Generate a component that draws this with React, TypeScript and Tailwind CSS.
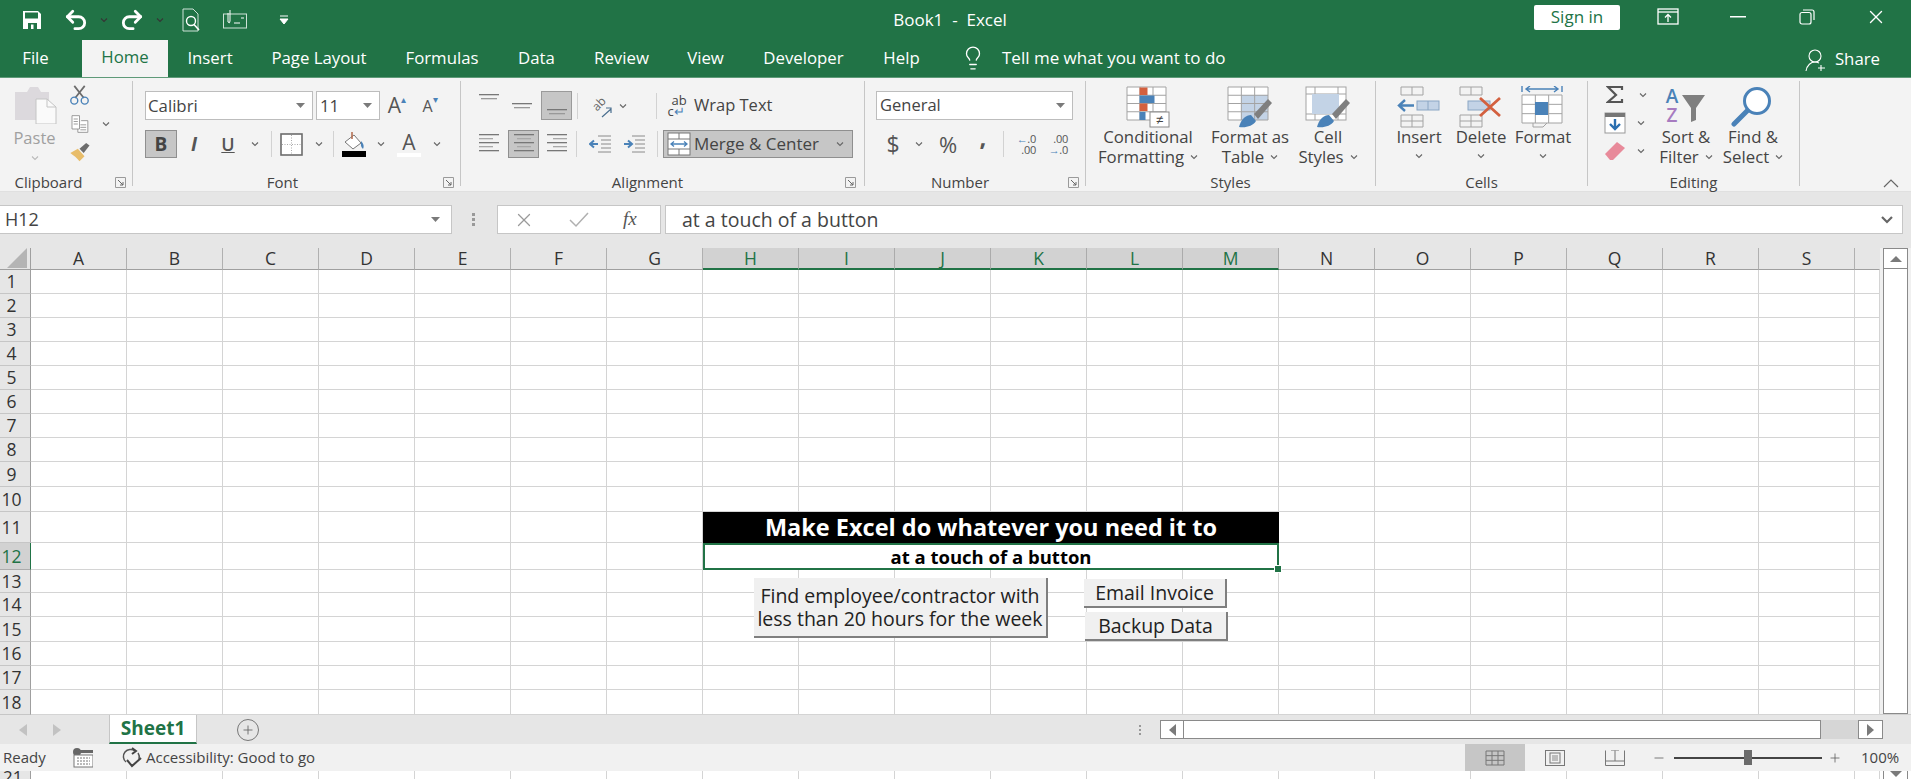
import { Undo2, Redo2, Lightbulb, Plus, X, Minus } from 'lucide-react'

const COLS = ['A', 'B', 'C', 'D', 'E', 'F', 'G', 'H', 'I', 'J', 'K', 'L', 'M', 'N', 'O', 'P', 'Q', 'R', 'S', '']
const ROWS = [
  { n: 1, h: 24 }, { n: 2, h: 24 }, { n: 3, h: 24 }, { n: 4, h: 24 }, { n: 5, h: 24 }, { n: 6, h: 24 },
  { n: 7, h: 24 }, { n: 8, h: 24 }, { n: 9, h: 25 }, { n: 10, h: 25 }, { n: 11, h: 31 }, { n: 12, h: 27 },
  { n: 13, h: 23 }, { n: 14, h: 24 }, { n: 15, h: 25 }, { n: 16, h: 24 }, { n: 17, h: 24 }, { n: 18, h: 25 },
]
const TABS = [
  { t: 'Insert', w: 'w-[44px]', ml: 'ml-[20px]' },
  { t: 'Page Layout', w: 'w-[96px]', ml: 'ml-[39px]' },
  { t: 'Formulas', w: 'w-[72px]', ml: 'ml-[39px]' },
  { t: 'Data', w: 'w-[37px]', ml: 'ml-[40px]' },
  { t: 'Review', w: 'w-[55px]', ml: 'ml-[39px]' },
  { t: 'View', w: 'w-[37px]', ml: 'ml-[38px]' },
  { t: 'Developer', w: 'w-[81px]', ml: 'ml-[39px]' },
  { t: 'Help', w: 'w-[37px]', ml: 'ml-[39px]' },
]

function Chev({ className = '' }: { className?: string }) {
  return (
    <svg width="8" height="6" viewBox="0 0 8 6" className={className}>
      <path d="M1 1.5 L4 4.5 L7 1.5" fill="none" stroke="#666" strokeWidth="1.1" />
    </svg>
  )
}

function Drop() {
  return (
    <svg width="9" height="5" viewBox="0 0 9 5">
      <path d="M0 0 H9 L4.5 5 Z" fill="#7a7a7a" />
    </svg>
  )
}

function Launcher() {
  return (
    <svg width="11" height="11" viewBox="0 0 11 11" className="shrink-0">
      <path d="M.5 .5 H10.5 V10.5 H.5 Z" fill="none" stroke="#9a9a9a" />
      <path d="M3 3 L8 8 M8 5 V8 H5" fill="none" stroke="#666" />
    </svg>
  )
}

function Sep({ className = '' }: { className?: string }) {
  return <div className={`w-px h-[26px] bg-[#d2d2d2] shrink-0 ${className}`} />
}

function AlignIcon({ rows }: { rows: [number, number][] }) {
  return (
    <svg width="20" height="22" viewBox="0 0 20 22">
      {rows.map(([x, w], i) => (
        <rect key={i} x={x} y={i * 4 + 1} width={w} height="1.3" fill={i % 2 ? '#a8a8a8' : '#777'} />
      ))}
    </svg>
  )
}

function VAlign({ y }: { y: number }) {
  return (
    <svg width="22" height="22" viewBox="0 0 22 22">
      <rect x="1" y={y} width="20" height="1.3" fill="#777" />
      <rect x="3" y={y + 4} width="16" height="1.3" fill="#999" />
    </svg>
  )
}

function GridLines({ x, y, w, h, cols, rows, color = '#a3a3a3' }: { x: number; y: number; w: number; h: number; cols: number; rows: number; color?: string }) {
  const c = Array.from({ length: cols + 1 }, (_, i) => x + (w / cols) * i)
  const r = Array.from({ length: rows + 1 }, (_, i) => y + (h / rows) * i)
  return (
    <g stroke={color} strokeWidth="1" fill="none">
      {c.map(v => <path key={`c${v}`} d={`M${v} ${y} V${y + h}`} />)}
      {r.map(v => <path key={`r${v}`} d={`M${x} ${v} H${x + w}`} />)}
    </g>
  )
}

function CondIcon() {
  return (
    <svg width="44" height="42" viewBox="0 0 44 42">
      <rect x="1" y="1" width="39" height="33" fill="#fff" />
      <GridLines x={1} y={1} w={39} h={33} cols={3} rows={4} />
      <rect x="13.5" y="1.5" width="8" height="7.5" fill="#d3603f" />
      <rect x="13.5" y="9.5" width="15" height="7.5" fill="#4a82b8" />
      <rect x="13.5" y="17.5" width="8" height="7.5" fill="#d3603f" />
      <rect x="13.5" y="26" width="6" height="8" fill="#4a82b8" />
      <rect x="24" y="26" width="19" height="15" fill="#fff" stroke="#8a8a8a" />
      <text x="33.5" y="38" fontSize="13" textAnchor="middle" fill="#444" fontFamily="'Liberation Sans', sans-serif">≠</text>
    </svg>
  )
}

function TableIcon() {
  return (
    <svg width="46" height="42" viewBox="0 0 46 42">
      <rect x="1" y="1" width="40" height="33" fill="#fff" />
      <rect x="14" y="9" width="27" height="25" fill="#c3d3e6" />
      <GridLines x={1} y={1} w={40} h={33} cols={3} rows={4} />
      <path d="M12 41 C14 33 19 29 24 29 L29 35 C26 40 19 42 12 41 Z" fill="#4a82b8" />
      <path d="M27 28 L31 33 L45 17 L41 13 Z" fill="#7f7f7f" />
    </svg>
  )
}

function CellStyleIcon() {
  return (
    <svg width="46" height="42" viewBox="0 0 46 42">
      <rect x="1" y="1" width="40" height="33" fill="#fff" stroke="#a3a3a3" />
      <path d="M1 8 H41 M10 1 V34 M33 1 V34 M1 28 H41" stroke="#a3a3a3" fill="none" />
      <rect x="7" y="8" width="27" height="20" fill="#c3d3e6" />
      <path d="M12 41 C14 33 19 29 24 29 L29 35 C26 40 19 42 12 41 Z" fill="#4a82b8" />
      <path d="M27 28 L31 33 L45 17 L41 13 Z" fill="#7f7f7f" />
    </svg>
  )
}

function InsertIcon() {
  return (
    <svg width="44" height="42" viewBox="0 0 44 42">
      <GridLines x={4} y={1} w={22} h={8} cols={2} rows={1} />
      <rect x="20" y="15" width="22" height="9" fill="#c3d3e6" stroke="#8aa6c4" />
      <path d="M31 15 V24" stroke="#8aa6c4" />
      <path d="M17 19.5 H3 M8 14 L2 19.5 L8 25" fill="none" stroke="#4a82b8" strokeWidth="2.4" />
      <GridLines x={4} y={29} w={22} h={12} cols={2} rows={2} />
    </svg>
  )
}

function DeleteIcon() {
  return (
    <svg width="44" height="42" viewBox="0 0 44 42">
      <GridLines x={1} y={1} w={22} h={8} cols={2} rows={1} />
      <rect x="9" y="15" width="22" height="9" fill="#c3d3e6" stroke="#8aa6c4" />
      <GridLines x={1} y={29} w={22} h={12} cols={2} rows={2} />
      <path d="M21 12 L41 30 M41 12 L21 30" stroke="#d3603f" strokeWidth="2.8" />
    </svg>
  )
}

function FormatIcon() {
  return (
    <svg width="44" height="42" viewBox="0 0 44 42">
      <path d="M1 0 V6 M41 0 V6 M5 3 H37 M9 0 L5 3 L9 6 M33 0 L37 3 L33 6" fill="none" stroke="#4a82b8" strokeWidth="1.4" />
      <rect x="1" y="9" width="40" height="28" fill="#fff" />
      <GridLines x={1} y={9} w={40} h={28} cols={3} rows={3} />
      <rect x="14" y="16" width="13" height="13" fill="#4a82b8" />
      <path d="M12 37 L12 41 H22 L26 37" fill="none" stroke="#a3a3a3" />
    </svg>
  )
}

function SortIcon() {
  return (
    <div className="flex items-start h-[41px] w-[46px] pt-[1px]">
      <div className="flex flex-col w-[18px] text-[19px] leading-[19px] font-semibold text-center">
        <span className="text-[#4a82b8]">A</span>
        <span className="text-[#a77bc0]">Z</span>
      </div>
      <svg width="25" height="36" viewBox="0 0 25 36" className="mt-[7px]">
        <path d="M1 1 H24 L15 14 V26 L10 28 V14 Z" fill="#7f7f7f" />
      </svg>
    </div>
  )
}

function FindIcon() {
  return (
    <svg width="44" height="42" viewBox="0 0 44 42">
      <circle cx="26" cy="15" r="12.5" fill="#fff" stroke="#4a82b8" strokeWidth="3" />
      <path d="M16 25 L3 38" stroke="#4a82b8" strokeWidth="5" strokeLinecap="round" />
    </svg>
  )
}

function Group({ w, label, labelPad = '', launcher, children }: { w: string; label: string; labelPad?: string; launcher?: string; children: React.ReactNode }) {
  return (
    <div className={`${w} shrink-0 h-[105px] border-r border-[#c6c6c6] flex flex-col`}>
      <div className="h-[92px] shrink-0 flex">{children}</div>
      <div className={`h-[18px] shrink-0 relative flex items-center justify-center text-[15px] text-[#444] ${labelPad}`}>
        {label}
        {launcher && <span className={`absolute top-[4px] ${launcher}`}><Launcher /></span>}
      </div>
    </div>
  )
}

function BigBtn({ w, icon, a, b }: { w: string; icon: React.ReactNode; a: string; b: string }) {
  return (
    <div className={`${w} shrink-0 flex flex-col items-center pt-[5px] text-[16.8px] leading-[20px] text-[#444]`}>
      <div className="h-[41px] shrink-0 flex justify-center">{icon}</div>
      <span className="whitespace-nowrap">{a}</span>
      <span className="whitespace-nowrap flex items-center gap-[6px] h-[20px]">
        {b}
        <Chev />
      </span>
    </div>
  )
}

function Ribbon() {
  return (
    <div className="h-[113px] bg-[#f3f3f3] flex items-start pt-[3px]">
      <Group w="w-[133px]" label="Clipboard" labelPad="pr-[35px]" launcher="left-[115px]">
        <div className="w-[66px] pl-[3px] flex flex-col items-center shrink-0">
          <svg width="42" height="38" viewBox="0 0 42 38" className="mt-[5px] ml-[3px]">
            <path d="M0 6 H12 L15 1 H23 L26 6 H34 V34 H0 Z" fill="#dcd9dd" />
            <path d="M21 13 H32 L41 21 V38 H21 Z" fill="#fafafa" stroke="#c4c4c4" />
            <path d="M32 13 V21 H41" fill="none" stroke="#c4c4c4" />
          </svg>
          <span className="text-[16.5px] leading-[20px] mt-[4px] text-[#a0a0a0]">Paste</span>
          <Chev className="mt-[7px] opacity-40" />
        </div>
        <div className="flex flex-col shrink-0 pt-[4px] pl-[3px]">
          <svg width="21" height="20" viewBox="0 0 24 23" className="mb-[9px]">
            <path d="M6 1 L17 15 M18 1 L7 15" stroke="#6c6c6c" strokeWidth="2" />
            <circle cx="6" cy="18" r="4" fill="none" stroke="#4a82b8" strokeWidth="1.6" />
            <circle cx="18" cy="18" r="4" fill="none" stroke="#4a82b8" strokeWidth="1.6" />
          </svg>
          <div className="flex items-center h-[20px]">
            <svg width="21" height="20" viewBox="0 0 24 24">
              <path d="M3 2 H12 V18 H3 Z M14 8 H22 V22 H10 V18" fill="#fff" stroke="#8a8a8a" />
              <path d="M5 6 H10 M5 9 H10 M5 12 H10 M13 13 H20 M13 16 H20 M13 19 H20" stroke="#8a8a8a" />
            </svg>
            <Chev className="ml-[12px]" />
          </div>
          <svg width="21" height="20" viewBox="0 0 24 24" className="mt-[9px]">
            <path d="M1 12 L10 7 L18 16 L12 22 C9 18 5 15 1 12 Z" fill="#e8bd6a" />
            <path d="M12 7 L20 0 L24 3 L17 12 Z" fill="#6c6c6c" />
          </svg>
        </div>
      </Group>

      <Group w="w-[328px]" label="Font" labelPad="pr-[28px]" launcher="left-[310px]">
        <div className="pl-[12px] pt-[10px] flex flex-col gap-[10px]">
          <div className="flex items-center h-[29px]">
            <div className="w-[168px] h-full bg-white border border-[#bdbdbd] flex items-center justify-between pl-[2px] pr-[7px] text-[16.8px] text-[#444]">Calibri<Drop /></div>
            <div className="w-[64px] ml-[3px] h-full bg-white border border-[#bdbdbd] flex items-center justify-between pl-[3px] pr-[7px] text-[16.8px] text-[#444]">11<Drop /></div>
            <div className="w-[34px] flex justify-center text-[#555] text-[21px] leading-none">A<span className="text-[10px] text-[#4a82b8] -mt-[1px]">▴</span></div>
            <div className="w-[32px] flex justify-center text-[#555] text-[16px] leading-none items-start">A<span className="text-[10px] text-[#4a82b8] -mt-[4px]">▾</span></div>
          </div>
          <div className="flex items-center h-[28px]">
            <div className="w-[32px] h-full bg-[#c6c6c6] border border-[#8f8f8f] flex items-center justify-center font-bold text-[19px] text-[#444]">B</div>
            <div className="w-[34px] flex justify-center italic font-bold text-[19px] text-[#555]">I</div>
            <div className="w-[34px] flex justify-center font-semibold text-[18px] text-[#555] underline">U</div>
            <div className="w-[20px] flex justify-center"><Chev /></div>
            <Sep className="ml-[6px] mr-[8px]" />
            <svg width="23" height="23" viewBox="0 0 23 23" className="mr-[3px]">
              <rect x="1" y="1" width="21" height="21" fill="#fff" stroke="#6c6c6c" strokeWidth="1.6" />
              <path d="M11.5 2 V21 M2 11.5 H21" stroke="#aaa" strokeDasharray="1 1.5" />
            </svg>
            <div className="w-[26px] flex justify-center"><Chev /></div>
            <Sep className="mx-[1px]" />
            <div className="w-[38px] flex justify-center">
              <svg width="26" height="26" viewBox="0 0 26 26">
                <path d="M4 11 L13 4 L20 12 L12 18 Z" fill="#fff" stroke="#777" />
                <path d="M20 10 Q24 14 22 18 Q19 15 20 10 Z" fill="#4a82b8" />
                <path d="M11 1 V8" stroke="#b2694a" strokeWidth="1.5" />
                <rect x="1" y="20" width="24" height="6" fill="#000" />
              </svg>
            </div>
            <div className="w-[16px] flex justify-center"><Chev /></div>
            <div className="w-[40px] flex flex-col items-center text-[21px] leading-[22px] font-medium text-[#555]">A<div className="w-[24px] h-[4px] bg-white" /></div>
            <div className="w-[16px] flex justify-center"><Chev /></div>
          </div>
        </div>
      </Group>

      <Group w="w-[404px]" label="Alignment" labelPad="pr-[30px]" launcher="left-[384px]">
        <div className="pl-[16px] pt-[10px] flex flex-col gap-[10px]">
          <div className="flex items-center h-[29px]">
            <div className="w-[24px] flex justify-center -mt-[8px]"><VAlign y={3} /></div>
            <div className="w-[24px] ml-[9px] flex justify-center"><VAlign y={8} /></div>
            <div className="w-[31px] h-full ml-[7px] bg-[#c6c6c6] border border-[#9a9a9a] flex items-center justify-center"><VAlign y={14} /></div>
            <Sep className="ml-[5px] mr-[5px]" />
            <div className="ml-[6px] w-[24px] h-[24px] flex items-center justify-center relative text-[#666]">
              <span className="-rotate-45 text-[12px] leading-none -mt-[3px] -ml-[3px]">ab</span>
              <svg width="12" height="12" viewBox="0 0 12 12" className="absolute right-0 bottom-0">
                <path d="M1 11 L10 3 M5 2 H10 V7" fill="none" stroke="#4a6f8f" strokeWidth="1.2" />
              </svg>
            </div>
            <div className="w-[17px] ml-[1px] flex justify-center"><Chev /></div>
            <Sep className="ml-[25px]" />
            <div className="ml-[12px] w-[20px] flex flex-col items-center text-[13px] leading-[11px] text-[#444]"><span>ab</span><span className="-ml-[6px]">c<span className="text-[#4a82b8]">↵</span></span></div>
            <span className="ml-[5px] text-[16.5px] text-[#444]">Wrap Text</span>
          </div>
          <div className="flex items-center h-[28px]">
            <div className="w-[24px] flex justify-center"><AlignIcon rows={[[0, 20], [0, 14], [0, 20], [0, 14], [0, 20]]} /></div>
            <div className="w-[31px] h-full ml-[7px] bg-[#c6c6c6] border border-[#8f8f8f] flex items-center justify-center"><AlignIcon rows={[[0, 20], [3, 14], [0, 20], [3, 14], [0, 20]]} /></div>
            <div className="w-[24px] ml-[6px] flex justify-center"><AlignIcon rows={[[0, 20], [6, 14], [0, 20], [6, 14], [0, 20]]} /></div>
            <Sep className="ml-[7px] mr-[12px]" />
            <svg width="22" height="20" viewBox="0 0 22 20">
              <path d="M9 2 H22 M12 6 H22 M12 10 H22 M12 14 H22 M9 18 H22" stroke="#8a8a8a" />
              <path d="M9 10 H2 M5 6.5 L1 10 L5 13.5" fill="none" stroke="#4a82b8" strokeWidth="2" />
            </svg>
            <svg width="22" height="20" viewBox="0 0 22 20" className="ml-[12px]">
              <path d="M9 2 H22 M12 6 H22 M12 10 H22 M12 14 H22 M9 18 H22" stroke="#8a8a8a" />
              <path d="M1 10 H8 M5 6.5 L9 10 L5 13.5" fill="none" stroke="#4a82b8" strokeWidth="2" />
            </svg>
            <Sep className="ml-[12px] mr-[5px]" />
            <div className="w-[190px] h-full bg-[#c6c6c6] border border-[#8f8f8f] flex items-center pl-[3px] text-[17px] text-[#444] whitespace-nowrap">
              <svg width="24" height="24" viewBox="0 0 24 24" className="shrink-0">
                <rect x="1" y="1" width="22" height="22" fill="#fff" stroke="#777" />
                <path d="M1 7 H23 M1 17 H23 M12 1 V7 M12 17 V23" stroke="#777" />
                <path d="M4 12 H20 M7 9.5 L4 12 L7 14.5 M17 9.5 L20 12 L17 14.5" fill="none" stroke="#4a82b8" strokeWidth="1.3" />
              </svg>
              <span className="ml-[3px]">Merge &amp; Center</span>
              <Chev className="ml-auto mr-[8px]" />
            </div>
          </div>
        </div>
      </Group>

      <Group w="w-[221px]" label="Number" labelPad="pr-[30px]" launcher="left-[203px]">
        <div className="pl-[11px] pt-[10px] flex flex-col gap-[10px]">
          <div className="w-[197px] h-[29px] bg-white border border-[#bdbdbd] flex items-center justify-between pl-[3px] pr-[7px] text-[16.5px] text-[#444]">General<Drop /></div>
          <div className="flex items-center h-[28px] text-[#555]">
            <div className="w-[34px] flex justify-center text-[23px]">$</div>
            <div className="w-[18px] flex justify-center"><Chev /></div>
            <div className="w-[40px] flex justify-center text-[22px]">%</div>
            <div className="w-[30px] flex justify-center text-[24px] font-bold leading-none -mt-[14px]">,</div>
            <Sep className="ml-[5px] mr-[8px]" />
            <div className="w-[24px] flex flex-col items-end text-[11px] leading-[11px] tracking-tight"><span><span className="text-[#4a82b8]">←</span>.0</span><span>.00</span></div>
            <div className="w-[26px] ml-[6px] flex flex-col items-end text-[11px] leading-[11px] tracking-tight"><span>.00</span><span><span className="text-[#4a82b8]">→</span>.0</span></div>
          </div>
        </div>
      </Group>

      <Group w="w-[290px]" label="Styles">
        <BigBtn w="w-[124px]" icon={<CondIcon />} a="Conditional" b="Formatting" />
        <BigBtn w="w-[80px]" icon={<TableIcon />} a="Format as" b="Table" />
        <BigBtn w="w-[76px]" icon={<CellStyleIcon />} a="Cell" b="Styles" />
      </Group>

      <Group w="w-[212px]" label="Cells">
        <div className="w-[12px] shrink-0" />
        {[
          { t: 'Insert', i: <InsertIcon /> },
          { t: 'Delete', i: <DeleteIcon /> },
          { t: 'Format', i: <FormatIcon /> },
        ].map(c => (
          <div key={c.t} className="w-[62px] shrink-0 flex flex-col items-center pt-[5px] text-[16.8px] leading-[20px] text-[#444]">
            <div className="h-[41px]">{c.i}</div>
            {c.t}
            <Chev className="mt-[6px]" />
          </div>
        ))}
      </Group>

      <Group w="w-[212px]" label="Editing">
        <div className="w-[65px] shrink-0 flex flex-col">
          <div className="h-[28px] flex items-center pl-[13px]">
            <svg width="18" height="18" viewBox="0 0 18 18" className="ml-[5px]">
              <path d="M16 4 V1 H2 L10 9 L2 16 H16 V13" fill="none" stroke="#555" strokeWidth="2.2" />
            </svg>
            <Chev className="ml-[15px]" />
          </div>
          <div className="h-[28px] flex items-center pl-[13px]">
            <svg width="22" height="22" viewBox="0 0 22 22" className="ml-[3px]">
              <rect x="1" y="1" width="20" height="20" fill="#fff" stroke="#999" />
              <rect x="1" y="1" width="20" height="4" fill="#777" />
              <path d="M11 7 V17 M6 12 L11 17 L16 12" fill="none" stroke="#2a6fb0" strokeWidth="2.4" />
            </svg>
            <Chev className="ml-[11px]" />
          </div>
          <div className="h-[28px] flex items-center pl-[13px]">
            <svg width="22" height="20" viewBox="0 0 22 20" className="ml-[3px]">
              <path d="M1 13 L13 1 L21 7 L9 19 H6 Z" fill="#e88a9a" />
            </svg>
            <Chev className="ml-[11px]" />
          </div>
        </div>
        <BigBtn w="w-[66px]" icon={<SortIcon />} a="Sort &" b="Filter" />
        <BigBtn w="w-[68px]" icon={<FindIcon />} a="Find &" b="Select" />
      </Group>

      <div className="flex-1 h-[105px] flex items-end justify-end pr-[12px]">
        <svg width="16" height="9" viewBox="0 0 16 9" className="-mb-[2px]">
          <path d="M1 8 L8 1 L15 8" fill="none" stroke="#666" strokeWidth="1.2" />
        </svg>
      </div>
    </div>
  )
}

function FormulaBar() {
  return (
    <div className="h-[57px] bg-[#e6e6e6] border-t border-[#e0e0e0] pt-[13px] flex items-start text-[#444]">
      <div className="w-[452px] h-[29px] shrink-0 bg-white border-y border-r border-[#c6c6c6] flex items-center justify-between pl-[5px] pr-[11px] text-[18px]">H12<Drop /></div>
      <div className="w-[45px] h-[29px] flex flex-col items-center justify-center gap-[2px] pr-[3px]">
        <div className="w-[3px] h-[3px] bg-[#999]" /><div className="w-[3px] h-[3px] bg-[#999]" /><div className="w-[3px] h-[3px] bg-[#999]" />
      </div>
      <div className="w-[164px] h-[29px] bg-white border border-[#c6c6c6] flex items-center">
        <X size={22} strokeWidth={1.4} className="ml-[15px] text-[#9a9a9a]" />
        <svg width="22" height="18" viewBox="0 0 22 18" className="ml-[33px]"><path d="M2 9 L8 15 L20 2" fill="none" stroke="#b0b0b0" strokeWidth="1.5" /></svg>
        <span className="ml-[33px] italic text-[19px] text-[#555] [font-family:'Liberation_Serif',serif]">fx</span>
      </div>
      <div className="w-[1238px] h-[29px] ml-[4px] bg-white border border-[#c6c6c6] flex items-center justify-between pl-[16px] pr-[8px] text-[19.5px]">
        at a touch of a button
        <svg width="14" height="9" viewBox="0 0 14 9"><path d="M2 2 L7 7 L12 2" fill="none" stroke="#666" strokeWidth="2.2" /></svg>
      </div>
    </div>
  )
}

function Row({ n, h }: { n: number; h: number }) {
  return (
    <div className="flex" style={{ height: h }}>
      <div className={`w-[31px] shrink-0 flex items-center pr-[7px] justify-center text-[17.5px] border-r border-b ${n === 12 ? 'bg-[#d2d2d2] text-[#217346] border-r-[#217346] border-b-[#ababab]' : 'bg-[#e6e6e6] text-[#333] border-r-[#9f9f9f] border-b-[#c6c6c6]'}`}>{n}</div>
      {COLS.map((c, i) => {
        if (n >= 11 && n <= 12 && i > 7 && i < 13) return null
        if (n >= 11 && n <= 12 && i === 7) {
          return n === 11 ? (
            <div key={c} className="w-[576px] shrink-0 bg-black text-white font-bold text-[23.5px] flex items-center justify-center">Make Excel do whatever you need it to</div>
          ) : (
            <div key={c} className="w-[576px] shrink-0 bg-white border-2 border-[#217346] text-black font-bold text-[18.5px] flex items-center justify-center">at a touch of a button</div>
          )
        }
        return <div key={i} className={`shrink-0 border-r border-b border-[#d4d4d4] bg-white ${i === 19 ? 'w-[25px]' : 'w-[96px]'}`} />
      })}
    </div>
  )
}

const MACRO_BTN = 'absolute bg-[#f0f0f0] border-r-2 border-b-2 border-[#7f7f7f] text-[19.5px] leading-[23px] text-[#222] text-center flex items-center justify-center whitespace-nowrap'

function Sheet() {
  return (
    <div className="h-[466px] flex bg-[#e6e6e6]">
      <div className="w-[1880px] shrink-0 relative">
        <div className="flex h-[22px]">
          <div className="w-[31px] shrink-0 border-r border-b border-[#9f9f9f] flex items-end justify-end pr-[3px] pb-[1px]">
            <svg width="20" height="20" viewBox="0 0 20 20"><path d="M20 0 V20 H0 Z" fill="#b4b4b4" /></svg>
          </div>
          {COLS.map((c, i) => {
            const on = i >= 7 && i <= 12
            return (
              <div key={i} className={`shrink-0 flex items-center justify-center text-[17.5px] border-r ${i === 19 ? 'w-[25px] border-b border-b-[#9f9f9f] border-r-transparent' : 'w-[96px]'} ${on ? 'bg-[#d2d2d2] text-[#217346] border-b-2 border-b-[#217346] border-r-[#ababab]' : i === 19 ? '' : 'text-[#333] border-b border-b-[#9f9f9f] border-r-[#b0b0b0]'}`}>{c}</div>
            )
          })}
        </div>
        {ROWS.map(r => <Row key={r.n} n={r.n} h={r.h} />)}
        <div className="absolute left-[1274px] top-[317px] w-[8px] h-[8px] bg-[#217346] border border-white" />
        <div className={`${MACRO_BTN} left-[754px] top-[330px] w-[294px] h-[60px]`}>Find employee/contractor with<br />less than 20 hours for the week</div>
        <div className={`${MACRO_BTN} left-[1084px] top-[331px] w-[143px] h-[29px]`}>Email Invoice</div>
        <div className={`${MACRO_BTN} left-[1085px] top-[364px] w-[143px] h-[29px]`}>Backup Data</div>
      </div>
      <div className="w-[31px] shrink-0 pl-[3px] pr-[3px] flex flex-col bg-[#f0f0f0]">
        <div className="h-[21px] bg-white border border-[#8a8a8a] flex items-center justify-center"><svg width="12" height="6" viewBox="0 0 12 6"><path d="M0 6 L6 0 L12 6 Z" fill="#7a7a7a" /></svg></div>
        <div className="flex-1 bg-white border-x border-b border-[#8a8a8a]" />
      </div>
    </div>
  )
}

function SheetTabs() {
  return (
    <div className="h-[30px] bg-[#e6e6e6] border-t border-[#cfcfcf] flex items-stretch">
      <div className="w-[109px] flex items-center shrink-0">
        <svg width="8" height="12" viewBox="0 0 8 12" className="ml-[19px]"><path d="M8 0 V12 L0 6 Z" fill="#c2c2c2" /></svg>
        <svg width="8" height="12" viewBox="0 0 8 12" className="ml-[26px]"><path d="M0 0 V12 L8 6 Z" fill="#c2c2c2" /></svg>
      </div>
      <div className="w-[88px] -mt-px bg-white border-x border-[#c6c6c6] border-b-2 border-b-[#217346] flex items-center justify-center text-[#217346] font-bold text-[19px]">Sheet1</div>
      <div className="ml-[40px] flex items-center">
        <div className="w-[22px] h-[22px] rounded-full border border-[#777] flex items-center justify-center"><Plus size={14} strokeWidth={1.5} className="text-[#666]" /></div>
      </div>
      <div className="ml-[871px] w-[20px] flex items-center justify-center gap-[2px] flex-col">
        <div className="w-[2px] h-[2px] bg-[#999]" /><div className="w-[2px] h-[2px] bg-[#999]" /><div className="w-[2px] h-[2px] bg-[#999]" />
      </div>
      <div className="w-[24px] ml-[10px] my-[5px] bg-white border border-[#8a8a8a] flex items-center justify-center"><svg width="7" height="12" viewBox="0 0 7 12"><path d="M7 0 V12 L0 6 Z" fill="#7a7a7a" /></svg></div>
      <div className="w-[637px] my-[5px] bg-white border-y border-r border-[#8a8a8a]" />
      <div className="w-[37px] my-[5px] bg-[#d6d6d6]" />
      <div className="w-[25px] my-[5px] bg-white border border-[#8a8a8a] flex items-center justify-center"><svg width="7" height="12" viewBox="0 0 7 12"><path d="M0 0 V12 L7 6 Z" fill="#7a7a7a" /></svg></div>
    </div>
  )
}

function StatusBar() {
  return (
    <div className="h-[27px] bg-[#f1f1f1] flex items-center text-[15px] text-[#444]">
      <span className="ml-[3px] w-[69px] shrink-0">Ready</span>
      <svg width="21" height="20" viewBox="0 0 21 20" className="shrink-0">
        <circle cx="5" cy="4" r="4" fill="#666" />
        <rect x="7" y="2" width="14" height="3" fill="#666" />
        <rect x="2" y="7" width="19" height="12" fill="#fff" stroke="#777" />
        <path d="M5 10 H18 M5 13 H18 M5 16 H18" stroke="#777" strokeDasharray="2 1" />
      </svg>
      <svg width="22" height="22" viewBox="0 0 22 22" className="ml-[28px] shrink-0">
        <path d="M5 15 A7 7 0 0 1 14 4" fill="none" stroke="#555" strokeWidth="1.5" />
        <path d="M17 6 A7 7 0 0 1 18 12" fill="none" stroke="#555" strokeWidth="1.5" />
        <path d="M11 1 L15 4 L11 7 M6 13 L11 19 L20 11" fill="none" stroke="#444" strokeWidth="2" />
      </svg>
      <span className="ml-[3px] whitespace-nowrap">Accessibility: Good to go</span>
      <div className="ml-auto flex items-center h-full">
        <div className="w-[60px] h-full bg-[#c6c6c6] flex items-center justify-center">
          <svg width="20" height="16" viewBox="0 0 20 16"><GridLines x={1} y={1} w={18} h={14} cols={3} rows={3} color="#777" /></svg>
        </div>
        <div className="w-[60px] flex justify-center">
          <svg width="20" height="16" viewBox="0 0 20 16"><rect x=".5" y=".5" width="19" height="15" fill="none" stroke="#777" /><rect x="5" y="3" width="10" height="10" fill="none" stroke="#777" /><path d="M7 6 H13 M7 8 H13 M7 10 H13" stroke="#888" /></svg>
        </div>
        <div className="w-[60px] flex justify-center">
          <svg width="20" height="16" viewBox="0 0 20 16"><path d="M.5 .5 V15.5 H19.5 V.5 M.5 11 H19.5 M10 .5 V11 M6 0 H14" fill="none" stroke="#777" /></svg>
        </div>
        <Minus size={14} strokeWidth={1.3} className="ml-[7px] text-[#555]" />
        <div className="ml-[8px] w-[148px] h-[2px] bg-[#444] flex items-center">
          <div className="ml-[70px] w-[8px] h-[15px] bg-[#6b6b6b]" />
        </div>
        <Plus size={14} strokeWidth={1.3} className="ml-[6px] text-[#555]" />
        <span className="ml-[19px] mr-[10px] w-[40px]">100%</span>
      </div>
    </div>
  )
}

export default function App() {
  return (
    <div className="w-[1911px] h-[779px] overflow-hidden bg-white [font-family:'Open_Sans',sans-serif] text-[15px]">
      <div className="h-[40px] bg-[#217346] flex items-center text-white relative">
        <svg width="20" height="20" viewBox="0 0 20 20" className="ml-[22px] shrink-0">
          <path d="M1 1 H16 L19 4 V19 H1 Z" fill="#fff" />
          <rect x="3" y="2.5" width="13" height="6" fill="#217346" />
          <rect x="6" y="13" width="9" height="6" fill="#217346" />
          <rect x="9" y="14.5" width="2.5" height="4.5" fill="#fff" />
        </svg>
        <Undo2 size={26} strokeWidth={2.6} className="ml-[21px] shrink-0" />
        <Chev className="ml-[11px] invert brightness-200" />
        <Redo2 size={26} strokeWidth={2.6} className="ml-[11px] shrink-0" />
        <Chev className="ml-[11px] invert brightness-200" />
        <svg width="24" height="24" viewBox="0 0 24 24" className="ml-[16px] shrink-0">
          <path d="M3 1 H13 L18 6 V23 H3 Z" fill="none" stroke="#cfe3d8" />
          <circle cx="11" cy="13" r="4.5" fill="none" stroke="#fff" strokeWidth="1.4" />
          <path d="M14 16.5 L19 22" stroke="#fff" strokeWidth="1.6" />
        </svg>
        <svg width="24" height="20" viewBox="0 0 24 20" className="ml-[19px] shrink-0">
          <rect x=".5" y="4" width="23" height="14" fill="none" stroke="#cfe3d8" />
          <path d="M7 0 V11 Q7 14 5 12 V3" fill="none" stroke="#fff" />
          <path d="M11 13 H17 M18 8 H21" stroke="#fff" />
        </svg>
        <svg width="10" height="10" viewBox="0 0 10 10" className="ml-[32px] shrink-0">
          <path d="M1 1 H9 M1 4 H9 L5 9 Z" fill="#fff" stroke="#fff" />
        </svg>
        <span className="absolute left-[880px] w-[140px] text-center text-[17px] whitespace-pre">Book1  -  Excel</span>
        <div className="ml-auto w-[86px] h-[25px] bg-white rounded-[2px] flex items-center justify-center text-[17px] text-[#217346] -mt-[6px]">Sign in</div>
        <svg width="22" height="18" viewBox="0 0 22 18" className="ml-[37px] -mt-[6px] shrink-0">
          <rect x="1" y="1" width="20" height="15" fill="none" stroke="#fff" strokeWidth="1.3" />
          <path d="M1 4 H21" stroke="#fff" strokeWidth="1.3" />
          <path d="M11 14 V7 M8 9.5 L11 6.5 L14 9.5" fill="none" stroke="#fff" strokeWidth="1.3" />
        </svg>
        <svg width="16" height="2" viewBox="0 0 16 2" className="ml-[51px] -mt-[6px] shrink-0"><rect width="16" height="1.5" fill="#fff" /></svg>
        <svg width="16" height="16" viewBox="0 0 16 16" className="ml-[53px] -mt-[6px] shrink-0">
          <rect x="1" y="3.5" width="11" height="11.5" rx="2" fill="none" stroke="#fff" strokeWidth="1.2" />
          <path d="M4 1 H13 Q15 1 15 3 V11" fill="none" stroke="#fff" strokeWidth="1.2" />
        </svg>
        <X size={22} strokeWidth={1.5} className="ml-[50px] mr-[24px] -mt-[6px] shrink-0" />
      </div>
      <div className="h-[38px] bg-[#217346] flex items-end text-[16.8px] text-white border-b border-[#5e9a78]">
        <div className="w-[82px] h-full flex items-center justify-center pb-[2px]"><span className="ml-[-11px]">File</span></div>
        <div className="w-[86px] h-[38px] bg-[#f3f3f3] flex items-center justify-center text-[#217346] pb-[2px]">Home</div>
        {TABS.map(t => (
          <div key={t.t} className={`${t.w} ${t.ml} h-full flex items-center justify-center pb-[2px] whitespace-nowrap`}>{t.t}</div>
        ))}
        <Lightbulb size={26} strokeWidth={1.2} className="ml-[40px] mb-[6px] shrink-0" />
        <span className="ml-[16px] h-full flex items-center pb-[2px] whitespace-nowrap text-[17px]">Tell me what you want to do</span>
        <svg width="22" height="24" viewBox="0 0 22 24" className="ml-auto mb-[5px] shrink-0">
          <circle cx="10" cy="8" r="6" fill="none" stroke="#fff" strokeWidth="1.1" />
          <path d="M1 23 C2 17 6 14 10 14 C12 14 13 14.5 14 15 M16 17 V23 M13 20 H20" fill="none" stroke="#fff" strokeWidth="1.1" />
        </svg>
        <span className="ml-[8px] mr-[31px] h-full flex items-center whitespace-nowrap">Share</span>
      </div>
      <Ribbon />
      <FormulaBar />
      <Sheet />
      <SheetTabs />
      <StatusBar />
      <div className="h-[8px] flex overflow-hidden">
        <div className="w-[31px] shrink-0 bg-[#e6e6e6] border-r border-[#9f9f9f] pl-[3px] -mt-[4px] text-[17px] leading-[20px] text-[#333] h-[20px]">21</div>
        {COLS.map((c, i) => <div key={i} className={`shrink-0 border-r border-[#d4d4d4] ${i === 19 ? 'w-[25px]' : 'w-[96px]'}`} />)}
        <div className="w-[3px] shrink-0" />
        <div className="w-[25px] shrink-0 border-x border-[#8a8a8a] flex justify-center"><svg width="12" height="6" viewBox="0 0 12 6"><path d="M0 0 L6 6 L12 0 Z" fill="#7a7a7a" /></svg></div>
      </div>
    </div>
  )
}
